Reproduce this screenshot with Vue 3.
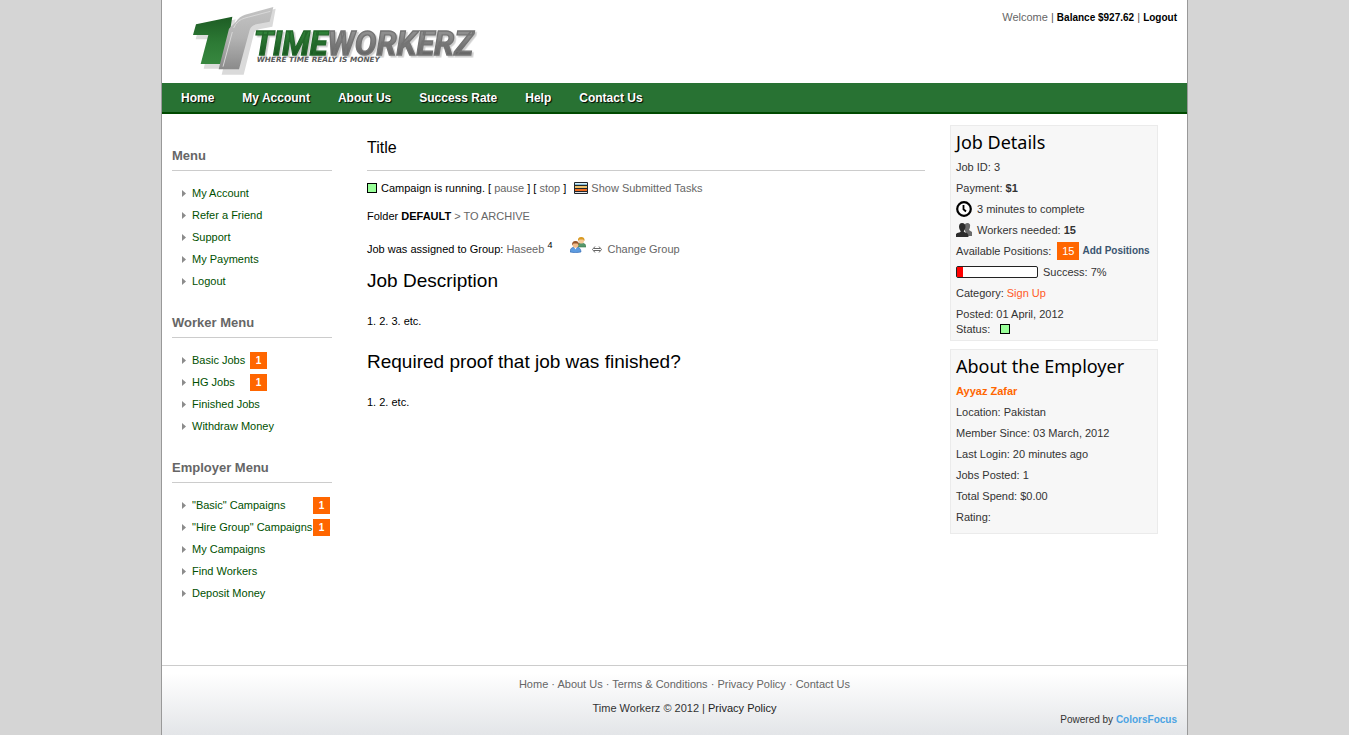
<script setup>
const navLinks = ['Home', 'My Account', 'About Us', 'Success Rate', 'Help', 'Contact Us']

const menus = [
  {
    title: 'Menu',
    kind: 'general',
    items: [
      { label: 'My Account' },
      { label: 'Refer a Friend' },
      { label: 'Support' },
      { label: 'My Payments' },
      { label: 'Logout' },
    ],
  },
  {
    title: 'Worker Menu',
    kind: 'worker',
    items: [
      { label: 'Basic Jobs', count: 1 },
      { label: 'HG Jobs', count: 1 },
      { label: 'Finished Jobs' },
      { label: 'Withdraw Money' },
    ],
  },
  {
    title: 'Employer Menu',
    kind: 'employer',
    items: [
      { label: '"Basic" Campaigns', count: 1 },
      { label: '"Hire Group" Campaigns', count: 1 },
      { label: 'My Campaigns' },
      { label: 'Find Workers' },
      { label: 'Deposit Money' },
    ],
  },
]

const employerFacts = [
  'Location: Pakistan',
  'Member Since: 03 March, 2012',
  'Last Login: 20 minutes ago',
  'Jobs Posted: 1',
  'Total Spend: $0.00',
  'Rating:',
]

const footerLinks = ['Home', 'About Us', 'Terms & Conditions', 'Privacy Policy', 'Contact Us']

const success = 7
</script>

<template>
  <div class="page">
    <header class="header">
      <a href="#" class="logo" aria-label="TimeWorkerz">
        <svg width="300" height="80" viewBox="90 0 900 240">
          <defs>
            <linearGradient id="green" x1="0" y1="0" x2="0" y2="1">
              <stop offset="0" stop-color="#1d5c24" />
              <stop offset="0.55" stop-color="#2d7a35" />
              <stop offset="1" stop-color="#37873f" />
            </linearGradient>
            <linearGradient id="silver" x1="0" y1="0" x2="0" y2="1">
              <stop offset="0" stop-color="#c4c4c4" />
              <stop offset="0.5" stop-color="#b2b2b2" />
              <stop offset="1" stop-color="#8b8b8b" />
            </linearGradient>
            <linearGradient id="greenText" x1="0" y1="0" x2="0" y2="1">
              <stop offset="0.2" stop-color="#2f8038" />
              <stop offset="0.9" stop-color="#164f1c" />
            </linearGradient>
            <linearGradient id="greyText" x1="0" y1="0" x2="0" y2="1">
              <stop offset="0.2" stop-color="#8f8f8f" />
              <stop offset="0.9" stop-color="#5c5c5c" />
            </linearGradient>
          </defs>
          <path d="M131 84L242 58L234 92L212 206H146L166 118H122Z" fill="#dcdcdc" />
          <path d="M252 66Q262 52 280 46L362 26L352 80L312 88L298 96L266 224H200L232 92Z" fill="#dadada" />
          <path d="M123 73L232 50L227 80L203 192H137L160 105H114Z" fill="url(#green)" />
          <path d="M243 65Q252 50 270 44L355 21L344 65L304 73Q288 76 284 90L252 208H191L194 196L222 86Z" fill="url(#silver)" />
          <path d="M236 84Q246 60 270 54L346 34M232 96L204 200" fill="none" stroke="#d8d8d8" stroke-width="3" />
          <text class="wordmark" x="296" y="166"><tspan fill="url(#greenText)" stroke="#22682a">TIME</tspan><tspan fill="url(#greyText)" stroke="#747474">WORKERZ</tspan></text>
          <text class="tagline" x="305" y="187">WHERE TIME REALY IS MONEY</text>
        </svg>
      </a>
      <p class="account">
        <a href="#" class="welcome">Welcome</a> | <a href="#">Balance $927.62</a> | <a href="#">Logout</a>
      </p>
    </header>

    <nav class="nav">
      <a v-for="link in navLinks" :key="link" href="#">{{ link }}</a>
    </nav>

    <div class="columns">
      <aside class="sidebar">
        <section v-for="menu in menus" :key="menu.title" :class="menu.kind">
          <h2>{{ menu.title }}</h2>
          <ul>
            <li v-for="item in menu.items" :key="item.label">
              <svg class="arrow" width="4" height="7" viewBox="0 0 4 7"><path d="M0 0L4 3.5L0 7Z" fill="#8c8c8c" /></svg>
              <a href="#" :class="{ counted: item.count }">{{ item.label }}</a>
              <span v-if="item.count" class="badge">{{ item.count }}</span>
            </li>
          </ul>
        </section>
      </aside>

      <main class="job">
        <h1>Title</h1>
        <p class="line">
          <span class="status"></span>
          <span class="state">Campaign is running. [ <a href="#">pause</a> ] [ <a href="#">stop</a> ]</span>
          <svg class="tasks-icon" width="14" height="13" viewBox="0 0 14 13">
            <rect width="14" height="12" rx="1" fill="#20262b" />
            <path d="M1 1.5H13" stroke="#d6edf8" />
            <path d="M1 2.5H13" stroke="#86bed8" />
            <path d="M1 5H13" stroke="#edc46f" stroke-width="2" />
            <path d="M1 8H13" stroke="#ee6b20" stroke-width="2" />
            <path d="M1 10.500H13" stroke="#e2e2e8" />
          </svg>
          <a href="#">Show Submitted Tasks</a>
        </p>
        <p class="line folder">Folder&nbsp;<b>DEFAULT</b>&nbsp;<a href="#">&gt; TO ARCHIVE</a></p>
        <p class="line group">
          <span>Job was assigned to Group: <a href="#">Haseeb</a> <sup>4</sup></span>
          <svg class="group-icon" width="16" height="16" viewBox="0 0 16 16">
            <path d="M7 10Q7 6 11 6Q16 6 16 10Z" fill="#55976b" stroke="#38794b" stroke-width="0.600" />
            <circle cx="11.200" cy="3.700" r="2.800" fill="#f5c999" />
            <path d="M8 4Q7.500 0 11.200 0Q15 0 14.500 4L13 2.500L9.500 2.500Z" fill="#d99a22" />
            <path d="M0 15Q0 10 5.500 10Q11 10 11 15Q5 16.500 0 15Z" fill="#5c9be0" stroke="#2e64ae" stroke-width="0.600" />
            <path d="M4 10L5.500 12.500L7 10Z" fill="#fff" />
            <circle cx="5.500" cy="7.800" r="3" fill="#f2bd8c" />
            <path d="M2.200 8.500Q1.500 4 5.500 4Q9.500 4 8.800 8.500L7.500 6.500L3.500 6.500Z" fill="#96562b" />
          </svg>
          <a href="#" class="change">
            <svg width="10" height="7" viewBox="0 0 10 7" fill="none" stroke="#666">
              <path d="M2 2.500H8M2 4.500H8M3 0.500L0.500 3.500L3 6.500M7 0.500L9.500 3.500L7 6.500" />
            </svg>
            Change Group
          </a>
        </p>
        <h2>Job Description</h2>
        <p class="text">1. 2. 3. etc.</p>
        <h2>Required proof that job was finished?</h2>
        <p class="text">1. 2. etc.</p>
      </main>

      <aside class="details">
        <section class="panel">
          <h2>Job Details</h2>
          <p>Job ID: 3</p>
          <p>Payment:&nbsp;<b>$1</b></p>
          <p>
            <svg class="row-icon" width="16" height="16" viewBox="0 0 16 16" fill="none" stroke="#000">
              <circle cx="8" cy="8" r="6.800" stroke-width="2.200" fill="#fff" />
              <path d="M7.500 4V8.300L10 10.500" stroke-width="1.800" />
            </svg>
            3 minutes to complete
          </p>
          <p>
            <svg class="row-icon" width="16" height="14" viewBox="0 0 16 14">
              <path d="M9 1Q12 -1 14 1.500Q14.500 4 13 7L16 9V13H12L9 8Z" fill="#6a6a6a" />
              <path d="M3 4Q3 0 6 0Q9.500 0 9.500 4Q9 7 7.700 8.300Q8 9.500 11 10Q12.500 11 12.500 14H0V11Q0.500 10 4 9.300Q5 9 4.500 8Q3.200 6.500 3 4Z" fill="#2c2c2c" />
            </svg>
            Workers needed:&nbsp;<b>15</b>
          </p>
          <p>Available Positions: <span class="positions">15</span><a href="#" class="add">Add Positions</a></p>
          <p>
            <span class="bar" role="progressbar" aria-label="Success" :aria-valuenow="success"><span :style="{ width: success + '%' }"></span></span>
            Success: {{ success }}%
          </p>
          <p>Category:&nbsp;<a href="#" class="category">Sign Up</a></p>
          <p>Posted: 01 April, 2012</p>
          <p class="last">Status: <span class="status"></span></p>
        </section>

        <section class="panel">
          <h2>About the Employer</h2>
          <p><a href="#" class="employer-name">Ayyaz Zafar</a></p>
          <p v-for="fact in employerFacts" :key="fact">{{ fact }}</p>
        </section>
      </aside>
    </div>

    <footer class="footer">
      <p class="footer-links">
        <template v-for="(link, i) in footerLinks" :key="link"><template v-if="i"> · </template><a href="#">{{ link }}</a></template>
      </p>
      <p class="copyright">Time Workerz © 2012 | <a href="#">Privacy Policy</a></p>
      <p class="powered">Powered by <a href="#">ColorsFocus</a></p>
    </footer>
  </div>
</template>

<style>
body {
  margin: 0;
  background: #d5d5d5;
}
</style>

<style scoped>
.page {
  display: flex;
  flex-direction: column;
  box-sizing: border-box;
  max-width: 1027px;
  min-height: 100vh;
  margin: 0 auto;
  border: solid #999;
  border-width: 0 1px;
  background: #fff;
  color: #000;
  font: 11px/16px "Liberation Sans", Arial, sans-serif;
}
p, h1, h2, ul {
  margin: 0;
  padding: 0;
}
a {
  color: #666;
  text-decoration: none;
}
.header {
  display: flex;
  justify-content: space-between;
  height: 83px;
  padding: 0 10px 0 23px;
  box-sizing: border-box;
}
.logo svg {
  display: block;
}
.wordmark {
  font: italic bold 97px Roboto, "Liberation Sans", sans-serif;
  stroke-width: 4px;
  filter: drop-shadow(5px 5px 1px #ccc);
}
.tagline {
  font: italic bold 22px "DejaVu Sans", sans-serif;
  fill: #5a5a5a;
}
.account {
  padding-top: 9px;
  color: #555;
}
.account a {
  color: #000;
  font-size: 10px;
  font-weight: bold;
}
.account .welcome {
  color: #666;
  font-size: 11px;
  font-weight: normal;
}
.nav {
  display: flex;
  padding: 0 5px;
  background: #287233;
  border-bottom: 2px solid #004a00;
}
.nav a {
  padding: 1px 14px 0;
  color: #fff;
  font-size: 12px;
  font-weight: bold;
  line-height: 28px;
  text-shadow: 1px 1px 1px #000;
}
.columns {
  display: flex;
  padding: 0 29px 0 10px;
}
.sidebar {
  flex: none;
  width: 160px;
  padding-top: 32px;
}
.sidebar section {
  margin-bottom: 21px;
}
.sidebar h2 {
  padding-bottom: 4px;
  border-bottom: 1px solid #ccc;
  color: #666;
  font-size: 13px;
  line-height: 20px;
}
.sidebar ul {
  padding: 11px 0 0 10px;
  list-style: none;
}
.sidebar li {
  display: flex;
  align-items: center;
  height: 22px;
  white-space: nowrap;
}
.sidebar li a {
  margin-left: 6px;
  color: #005000;
}
.worker .counted {
  width: 53px;
}
.employer .counted {
  width: 116px;
}
.badge {
  width: 17px;
  margin-left: 5px;
  background: #f60;
  color: #fff;
  font-size: 10px;
  font-weight: bold;
  line-height: 17px;
  text-align: center;
}
.job {
  flex: 1;
  margin: 0 25px 0 35px;
}
.job h1 {
  padding: 24px 0 12px;
  border-bottom: 1px solid #ccc;
  font-size: 16px;
  font-weight: normal;
  line-height: 20px;
}
.line {
  display: flex;
  align-items: center;
  margin-top: 9px;
}
.line.folder {
  margin-top: 12px;
}
.line.group {
  margin-top: 17px;
}
.status {
  width: 8px;
  height: 8px;
  margin-right: 4px;
  border: 1px solid #000;
  background: #99ff99;
}
.state {
  margin-right: 8px;
}
.tasks-icon {
  margin-right: 3px;
}
sup {
  font-size: 9px;
  line-height: 0;
}
.group-icon {
  margin: -8px 6px 0 18px;
}
.change svg {
  margin-right: 2px;
}
.job h2 {
  margin-top: 12px;
  font-size: 19px;
  font-weight: normal;
  line-height: 24px;
}
.text {
  margin-top: 20px;
}
.text + h2 {
  margin-top: 21px;
}
.details {
  flex: none;
  width: 208px;
  padding-top: 11px;
}
.panel {
  margin-bottom: 8px;
  padding: 5px 5px 6px;
  border: 1px solid #ebebeb;
  background: #f7f7f7;
  color: #333;
}
.panel h2 {
  margin-bottom: 2px;
  color: #000;
  font: 18px/23px "Noto Sans", sans-serif;
}
.panel p {
  display: flex;
  align-items: center;
  height: 21px;
  white-space: nowrap;
}
.panel .last {
  height: 10px;
}
.row-icon {
  margin-right: 5px;
}
.positions {
  margin: 0 3px 0 6px;
  padding: 0 5px;
  background: #f60;
  color: #fff;
  line-height: 18px;
}
.add {
  color: #3a5570;
  font-weight: bold;
  font-size: 10px;
}
.bar {
  width: 80px;
  height: 10px;
  margin-right: 5px;
  border: 1px solid #222;
  border-radius: 2px;
  background: #fff;
}
.bar span {
  display: block;
  height: 100%;
  background: #f00;
}
.category {
  color: #ff5a1f;
}
.employer-name {
  color: #f60;
  font-weight: bold;
}
.last .status {
  margin-left: 10px;
}
.footer {
  margin-top: auto;
  padding: 10px 10px 11px;
  border-top: 1px solid #ccc;
  background: linear-gradient(#fff 10%, #e3e5e8);
  color: #333;
  text-align: center;
}
.footer-links,
.copyright {
  padding-left: 20px;
}
.footer-links {
  color: #666;
}
.copyright {
  margin-top: 8px;
}
.copyright a {
  color: #222;
}
.powered {
  font-size: 10px;
  line-height: 8px;
  text-align: right;
}
.powered a {
  color: #4ba3e3;
  font-weight: bold;
}
</style>
